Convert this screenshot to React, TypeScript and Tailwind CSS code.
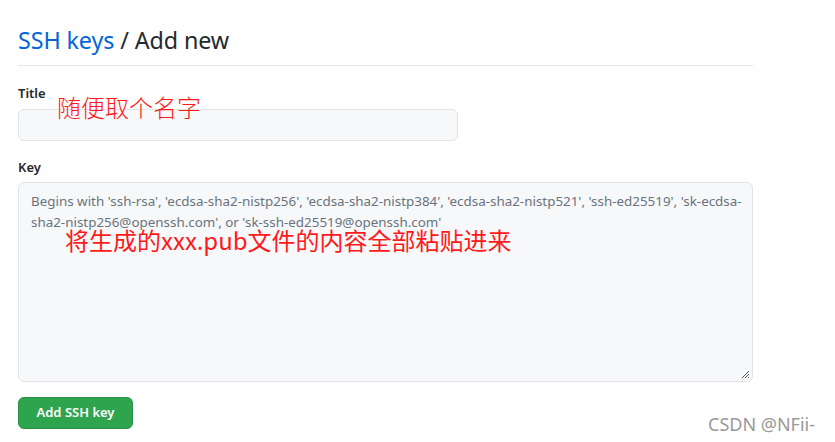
import React from "react";

const font = '"Noto Sans", "Open Sans", "Liberation Sans", sans-serif';
const cjk = '"Noto Sans CJK SC", "Noto Sans", sans-serif';

export default function App() {
  return (
    <div className="relative w-[835px] h-[442px] bg-white overflow-hidden" style={{ fontFamily: font }}>
      <div className="pl-[18px] w-[753px] pt-[24px]">
        <div className="pb-[9px] border-b border-[#e1e4e8]">
          <h1 className="text-[23.3px] leading-[32px] text-[#24292e] font-normal tracking-[-0.1px]">
            <span className="text-[#0366d6]">SSH keys</span> / Add new
          </h1>
        </div>
        <div className="mt-[17px]">
          <div className="text-[13px] font-semibold text-[#24292e] leading-[20px]">Title</div>
          <div className="mt-[6px] w-[440px] h-[32px] bg-[#f6f8fa] border border-[#e1e4e8] rounded-[6px]" />
        </div>
        <div className="mt-[16px]">
          <div className="text-[13px] font-semibold text-[#24292e] leading-[20px]">Key</div>
          <div className="relative mt-[5px] w-[735px] h-[200px] bg-[#f6f8fa] border border-[#e1e4e8] rounded-[6px] px-[12px] pt-[8px]">
            <p className="text-[13.4px] leading-[21px] text-[#6a737d] whitespace-nowrap">
              Begins with 'ssh-rsa', 'ecdsa-sha2-nistp256', 'ecdsa-sha2-nistp384', 'ecdsa-sha2-nistp521', 'ssh-ed25519', 'sk-ecdsa-
              <br />
              sha2-nistp256@openssh.com', or 'sk-ssh-ed25519@openssh.com'
            </p>
            <svg className="absolute right-[2px] bottom-[2px]" width="9" height="9" viewBox="0 0 9 9">
              <path d="M8 1 L1 8 M8 4 L4 8 M8 7 L7 8" stroke="#555" strokeWidth="1" />
            </svg>
          </div>
        </div>
        <button className="mt-[15px] w-[115px] h-[32px] bg-[#2ea44f] border border-[#2a9147] rounded-[6px] text-white text-[13px] font-semibold">
          Add SSH key
        </button>
      </div>

      <div className="absolute left-[57px] top-[91px] text-[24px] leading-[32px] text-[#ff1a1a] font-light" style={{ fontFamily: cjk }}>
        随便取个名字
      </div>
      <div className="absolute left-[65px] top-[224px] text-[24px] leading-[32px] text-[#ff1a1a]" style={{ fontFamily: cjk }}>
        将生成的xxx.pub文件的内容全部粘贴进来
      </div>
      <div className="absolute left-[708px] top-[412px] text-[18px] leading-[24px] text-[#999999]" style={{ fontFamily: font }}>
        CSDN @NFii-
      </div>
    </div>
  );
}
